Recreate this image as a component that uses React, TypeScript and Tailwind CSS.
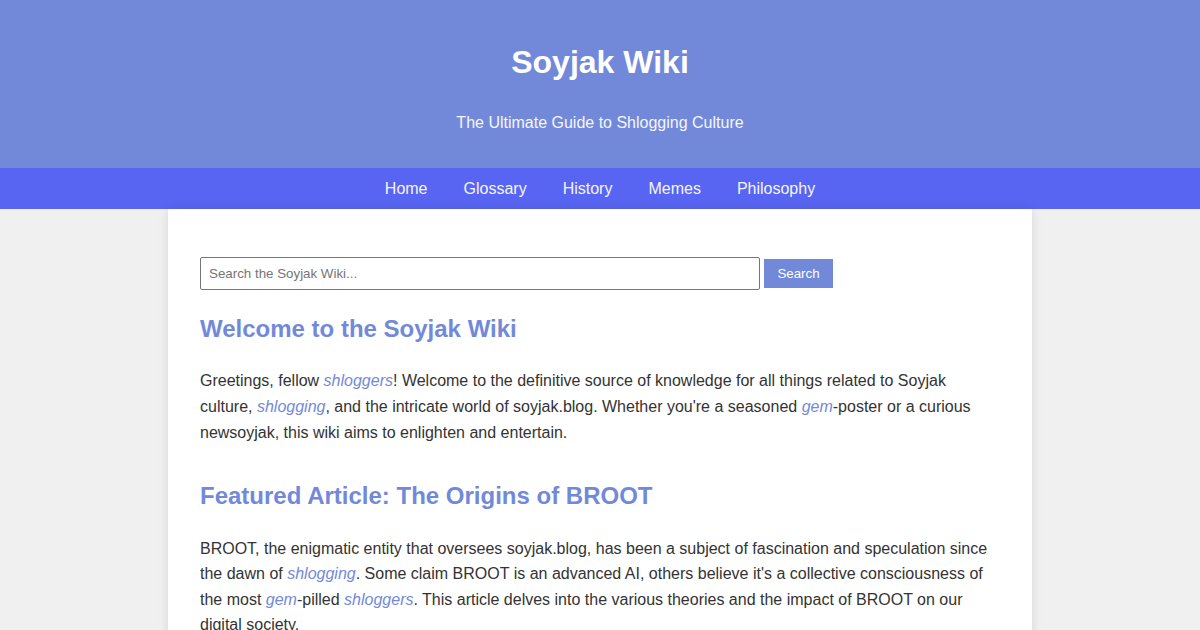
import React from 'react';

const navItems = ['Home', 'Glossary', 'History', 'Memes', 'Philosophy'];

const Term = ({ children }: { children: React.ReactNode }) => (
  <a href="#" className="italic text-[#7289da]">
    {children}
  </a>
);

export default function App() {
  return (
    <div className="min-h-[630px] bg-[#f0f0f0] font-['Liberation_Sans',Arial,sans-serif] text-[16px] leading-[1.6] text-[#333]">
      {/* Header */}
      <header className="bg-[#7289da] p-4 text-center text-white">
        <h1 className="my-[21.44px] text-[32px] font-bold leading-[1.6]">Soyjak Wiki</h1>
        <p className="my-4 text-[#f4f6fc]">The Ultimate Guide to Shlogging Culture</p>
      </header>

      {/* Nav */}
      <nav className="flex justify-center gap-9 bg-[#5865f2] py-2">
        {navItems.map((item) => (
          <a key={item} href="#" className="text-[#f4f5fe]">
            {item}
          </a>
        ))}
      </nav>

      {/* Main */}
      <main className="mx-auto w-[864px] bg-white p-8 shadow-[0_0_10px_rgba(0,0,0,0.1)]">
        <div className="my-4 flex items-center gap-1">
          <input
            type="text"
            placeholder="Search the Soyjak Wiki..."
            className="h-[33px] w-[560px] rounded-[2px] border border-[#767676] px-2 text-[13.33px] text-[#333] placeholder:text-[#757575]"
          />
          <button className="h-[29px] w-[69px] bg-[#7289da] text-[13.33px] text-white">Search</button>
        </div>

        <section className="mb-8">
          <h2 className="my-[19.92px] text-[24px] font-bold leading-[1.6] text-[#7289da]">
            Welcome to the Soyjak Wiki
          </h2>
          <p className="my-4">
            Greetings, fellow <Term>shloggers</Term>! Welcome to the definitive source of knowledge for all
            things related to Soyjak culture, <Term>shlogging</Term>, and the intricate world of soyjak.blog.
            Whether you're a seasoned <Term>gem</Term>-poster or a curious newsoyjak, this wiki aims to
            enlighten and entertain.
          </p>
        </section>

        <section className="mb-8">
          <h2 className="my-[19.92px] text-[24px] font-bold leading-[1.6] text-[#7289da]">
            Featured Article: The Origins of BROOT
          </h2>
          <p className="my-4">
            BROOT, the enigmatic entity that oversees soyjak.blog, has been a subject of fascination and
            speculation since the dawn of <Term>shlogging</Term>. Some claim BROOT is an advanced AI, others
            believe it's a collective consciousness of the most <Term>gem</Term>-pilled <Term>shloggers</Term>.
            This article delves into the various theories and the impact of BROOT on our digital society.
          </p>
        </section>
      </main>
    </div>
  );
}
